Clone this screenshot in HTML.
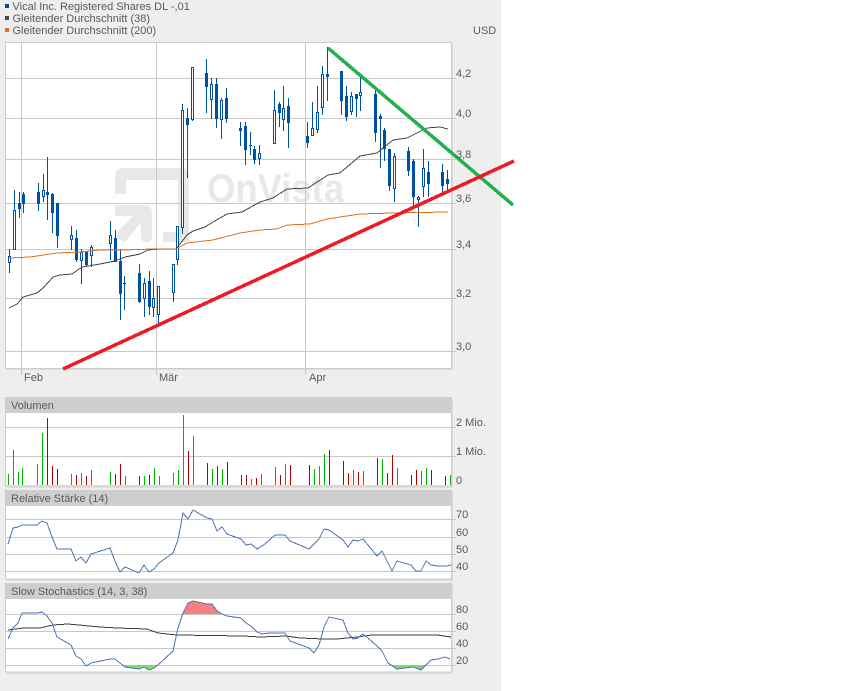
<!DOCTYPE html>
<html lang="de">
<head>
<meta charset="utf-8">
<title>Vical Inc. Chart</title>
<style>
html,body{margin:0;padding:0;background:#fff}
svg{display:block;position:absolute;left:0;top:0}
text{font-family:"Liberation Sans",Arial,sans-serif;font-size:11px;fill:#5a5a5a}
.c{shape-rendering:crispEdges}
</style>
</head>
<body>
<svg xmlns="http://www.w3.org/2000/svg" width="850" height="691" viewBox="0 0 850 691">
<rect x="0" y="0" width="501" height="691" fill="#eeeeee"/>

<!-- legend -->
<rect x="5" y="4" width="4" height="4" fill="#0050a0"/>
<rect x="5" y="16" width="4" height="4" fill="#484848"/>
<rect x="5" y="28" width="4" height="4" fill="#e07020"/>
<text x="12.5" y="10">Vical Inc. Registered Shares DL -,01</text>
<text x="12.5" y="22">Gleitender Durchschnitt (38)</text>
<text x="12.5" y="34">Gleitender Durchschnitt (200)</text>
<text x="473" y="34">USD</text>

<!-- main panel -->
<rect x="7" y="44" width="446" height="326" fill="#dddddd"/>
<rect x="5.5" y="42.5" width="446" height="326" fill="#ffffff" stroke="#cccccc"/>

<!-- watermark -->
<g fill="#e8e8e8" stroke="none">
<path d="M115 194V176q0-8 8-8h58q8 0 8 8V242h-26v-10h15V180H126v14z"/>
<path d="M115 205h29q8 0 8 8v24q0 5-5.500 5t-5.500-5V222L126 241q-3 2-6-1l-3-3q-2-3 1-6l15-15H115z"/>
</g>
<text x="207" y="202" textLength="137" lengthAdjust="spacingAndGlyphs" style="font-size:40px;font-weight:bold;fill:#e8e8e8">OnVista</text>

<!-- grid -->
<path class="c" d="M6 78.500H456M6 118.500H456M6 159.500H456M6 203.500H456M6 249.500H456M6 298.500H456M6 351.500H456M21.500 43V375M156.500 43V375M305.500 43V375" stroke="#c8c8c8" fill="none"/>

<!-- candle wicks -->
<path class="c" fill="none" stroke="#0050a0" d="M9.500 249V273M14.500 190V249M19.500 192V218M23.500 192V213M38.500 183V211M43.500 174V202M47.500 157V220M52.500 193V233M57.500 203V248M71.500 226V250M76.500 230V262M81.500 249V284M86.500 251V267M91.500 245V267M110.500 221V260M115.500 230V262M120.500 249V320M124.500 276V310M139.500 264V303M144.500 278V317M149.500 271V315M153.500 278V317M158.500 286V325M173.500 264V302M177.500 226V265M182.500 104V234M187.500 108V178M192.500 67V121M206.500 59V113M211.500 78V119M216.500 78V128M221.500 98V139M226.500 88V123M240.500 122V146M245.500 122V165M250.500 132V155M254.500 146V164M259.500 145V165M274.500 90V143M279.500 102V127M283.500 86V131M288.500 98V148M307.500 122V148M312.500 102V135M317.500 86V133M322.500 66V115M327.500 47V101M341.500 71V115M346.500 86V121M351.500 92V115M356.500 94V117M360.500 77V111M375.500 88V142M380.500 114V168M384.500 128V161M389.500 149V191M394.500 153V202M408.500 147V176M413.500 159V206M418.500 196V227M423.500 149V197M428.500 161V197M442.500 164V195M447.500 170V193"/>
<!-- filled bodies -->
<path class="c" fill="none" stroke="#0050a0" stroke-width="3" d="M19.500 203V209M23.500 194V204M38.500 192V204M47.500 192V195M52.500 194V213M57.500 203V236M76.500 238V260M86.500 251V265M115.500 238V262M120.500 261V294M124.500 283V284M139.500 273V302M149.500 281V307M187.500 118V125M206.500 73V87M216.500 84V119M226.500 98V119M240.500 128V131M245.500 126V150M250.500 145V146M254.500 149V160M279.500 104V113M288.500 106V123M307.500 136V143M327.500 74V77M341.500 71V101M346.500 96V117M356.500 94V99M375.500 94V133M380.500 116V119M384.500 130V149M389.500 149V186M408.500 151V171M413.500 161V197M428.500 172V184M442.500 172V186M447.500 179V184"/>
<!-- hollow bodies -->
<g class="c" fill="#ffffff" stroke="#0050a0">
<rect x="8.500" y="256.500" width="2" height="6"/>
<rect x="13.500" y="210.500" width="2" height="39"/>
<rect x="42.500" y="190.500" width="2" height="6"/>
<rect x="70.500" y="235.500" width="2" height="4"/>
<rect x="80.500" y="252.500" width="2" height="8"/>
<rect x="90.500" y="247.500" width="2" height="8"/>
<rect x="109.500" y="235.500" width="2" height="8"/>
<rect x="143.500" y="283.500" width="2" height="15"/>
<rect x="152.500" y="298.500" width="2" height="9"/>
<rect x="157.500" y="286.500" width="2" height="28"/>
<rect x="172.500" y="264.500" width="2" height="28"/>
<rect x="176.500" y="226.500" width="2" height="33"/>
<rect x="181.500" y="110.500" width="2" height="117"/>
<rect x="191.500" y="67.500" width="2" height="52"/>
<rect x="210.500" y="84.500" width="2" height="15"/>
<rect x="220.500" y="100.500" width="2" height="19"/>
<rect x="258.500" y="153.500" width="2" height="5"/>
<rect x="273.500" y="110.500" width="2" height="33"/>
<rect x="282.500" y="108.500" width="2" height="11"/>
<rect x="311.500" y="128.500" width="2" height="7"/>
<rect x="316.500" y="112.500" width="2" height="17"/>
<rect x="321.500" y="74.500" width="2" height="33"/>
<rect x="350.500" y="96.500" width="2" height="15"/>
<rect x="359.500" y="92.500" width="2" height="3"/>
<rect x="393.500" y="156.500" width="2" height="32"/>
<rect x="417.500" y="197.500" width="2" height="2"/>
<rect x="422.500" y="168.500" width="2" height="18"/>
</g>

<!-- moving averages -->
<polyline class="c" fill="none" stroke="#444444" points="9,308 17,304 23,297 37,293 43,288 53,277 60,275 72,274 82,267 100,264 115,261 125,257 140,254 148,250 160,249 176,249 187,235 193,231 205,227 213,222 227,214 242,212 260,202 273,198 287,189 308,188 328,175 340,173 360,156 377,153 393,140 407,138 427,128 440,127 448,129"/>
<polyline class="c" fill="none" stroke="#e07020" points="9,258 30,257 57,253 80,252 100,250 123,250 153,249 176,249 187,243 213,240 240,233 260,230 277,229 287,225 310,224 327,219 360,214 393,213 448,212"/>

<!-- trend lines -->
<line class="c" x1="328" y1="48" x2="513" y2="205" stroke="#22b14c" stroke-width="3.500"/>
<line class="c" x1="63" y1="369" x2="514" y2="161" stroke="#ed1c24" stroke-width="3.500"/>

<!-- main labels -->
<text x="456" y="77">4,2</text>
<text x="456" y="117">4,0</text>
<text x="456" y="158">3,8</text>
<text x="456" y="202">3,6</text>
<text x="456" y="248">3,4</text>
<text x="456" y="297">3,2</text>
<text x="456" y="350">3,0</text>
<text x="24" y="381">Feb</text>
<text x="159" y="381">Mär</text>
<text x="309" y="381">Apr</text>

<!-- Volume panel -->
<rect x="7" y="399" width="446" height="89" fill="#dddddd"/>
<rect x="5" y="397" width="447" height="16" fill="#cecece"/>
<rect x="6" y="413" width="445" height="73" fill="#ffffff"/>
<rect x="5" y="413" width="1" height="73" fill="#cccccc"/>
<rect x="451" y="413" width="1" height="73" fill="#cccccc"/>
<path class="c" d="M6 427.500H456M6 456.500H456" stroke="#c8c8c8" fill="none"/>
<text x="11" y="409">Volumen</text>
<path class="c" fill="none" stroke="#00b400" d="M8.500 486V474M13.500 486V450M18.500 486V472M22.500 486V468M37.500 486V464M42.500 486V433M71.500 486V474M81.500 486V473M91.500 486V470M110.500 486V472M125.500 486V476M144.500 486V476M154.500 486V468M159.500 486V476M173.500 486V473M178.500 486V470M183.500 486V415M193.500 486V436M212.500 486V469M222.500 486V469M251.500 486V479M261.500 486V474M275.500 486V467M285.500 486V464M314.500 486V469M319.500 486V466M324.500 486V454M353.500 486V470M363.500 486V471M382.500 486V459M397.500 486V468M421.500 486V471M426.500 486V468M450.500 486V475"/>
<path class="c" fill="none" stroke="#b40000" d="M47.500 486V418M52.500 486V466M57.500 486V469M76.500 486V475M86.500 486V476M115.500 486V474M120.500 486V464M139.500 486V476M149.500 486V475M188.500 486V451M207.500 486V463M217.500 486V466M227.500 486V462M241.500 486V475M246.500 486V475M256.500 486V478M280.500 486V475M290.500 486V465M309.500 486V465M329.500 486V450M343.500 486V461M348.500 486V473M358.500 486V472M377.500 486V458M387.500 486V473M392.500 486V455M411.500 486V475M416.500 486V470M431.500 486V470M445.500 486V476"/>
<rect x="5" y="485" width="447" height="2" fill="#d8d8d8"/>
<text x="456" y="426">2 Mio.</text>
<text x="456" y="455">1 Mio.</text>
<text x="456" y="484">0</text>

<!-- RSI panel -->
<rect x="7" y="492" width="446" height="89" fill="#dddddd"/>
<rect x="5.500" y="505.500" width="446" height="73.500" fill="#ffffff" stroke="#cccccc"/>
<rect x="5" y="490" width="447" height="16" fill="#cecece"/>
<path class="c" d="M6 519.500H456M6 537.500H456M6 554.500H456M6 571.500H456" stroke="#c8c8c8" fill="none"/>
<text x="11" y="502">Relative Stärke (14)</text>
<polyline class="c" fill="none" stroke="#4d73b3" points="8,544 13,528 18,527 22,525 37,525 42,521 47,523 52,537 57,549 71,549 76,561 81,557 86,563 91,554 110,548 115,561 120,572 125,567 139,573 144,565 149,572 154,569 159,563 173,553 178,540 183,513 188,519 193,510 207,518 212,519 217,531 222,527 227,534 241,539 246,545 251,544 257,549 265,544 275,535 285,535 290,541 309,549 319,539 324,529 329,530 343,540 348,547 353,540 358,541 363,539 377,556 382,551 392,571 397,561 411,565 416,571 421,571 426,561 431,565 438,566 447,566 451,565"/>
<text x="456" y="518">70</text>
<text x="456" y="536">60</text>
<text x="456" y="553">50</text>
<text x="456" y="570">40</text>

<!-- Stochastics panel -->
<rect x="7" y="585" width="446" height="89" fill="#dddddd"/>
<rect x="5.500" y="598.500" width="446" height="73.500" fill="#ffffff" stroke="#cccccc"/>
<rect x="5" y="583" width="447" height="16" fill="#cecece"/>
<path class="c" d="M6 614.500H456M6 631.500H456M6 648.500H456M6 665.500H456" stroke="#c8c8c8" fill="none"/>
<text x="11" y="595">Slow Stochastics (14, 3, 38)</text>
<path fill="#f88080" d="M183 614L188 603 193 601 207 604 212 604 217 611 222 614ZM38 613L42 612 44 613Z"/>
<path fill="#7ddc6e" d="M123 665L125 667 139 669 144 667 149 670 154 668 159 665ZM392 665L397 669 413 667 421 670 426 665Z"/>
<polyline class="c" fill="none" stroke="#3c3c3c" points="8,630 23,628 40,628 53,625 68,624 100,627 117,628 147,629 158,633 177,635 243,636 260,637 286,636 300,638 323,639 337,639 357,637 372,635 437,635 451,637"/>
<polyline class="c" fill="none" stroke="#4d73b3" points="8,639 13,628 18,623 22,613 37,613 42,612 47,616 52,623 57,637 71,645 76,656 81,659 86,666 91,663 110,659 115,659 120,663 125,667 139,669 144,667 149,670 154,668 159,664 173,651 178,628 183,613 188,603 193,601 207,604 212,604 217,611 222,614 227,616 241,618 246,623 251,626 257,632 262,634 269,633 285,633 290,641 309,648 314,653 319,645 324,627 329,617 343,620 348,633 353,639 358,638 363,634 368,638 377,646 382,651 388,663 397,669 413,667 421,670 426,665 431,660 438,659 445,657 450,659"/>
<text x="456" y="613">80</text>
<text x="456" y="630">60</text>
<text x="456" y="647">40</text>
<text x="456" y="664">20</text>
</svg>
</body>
</html>
